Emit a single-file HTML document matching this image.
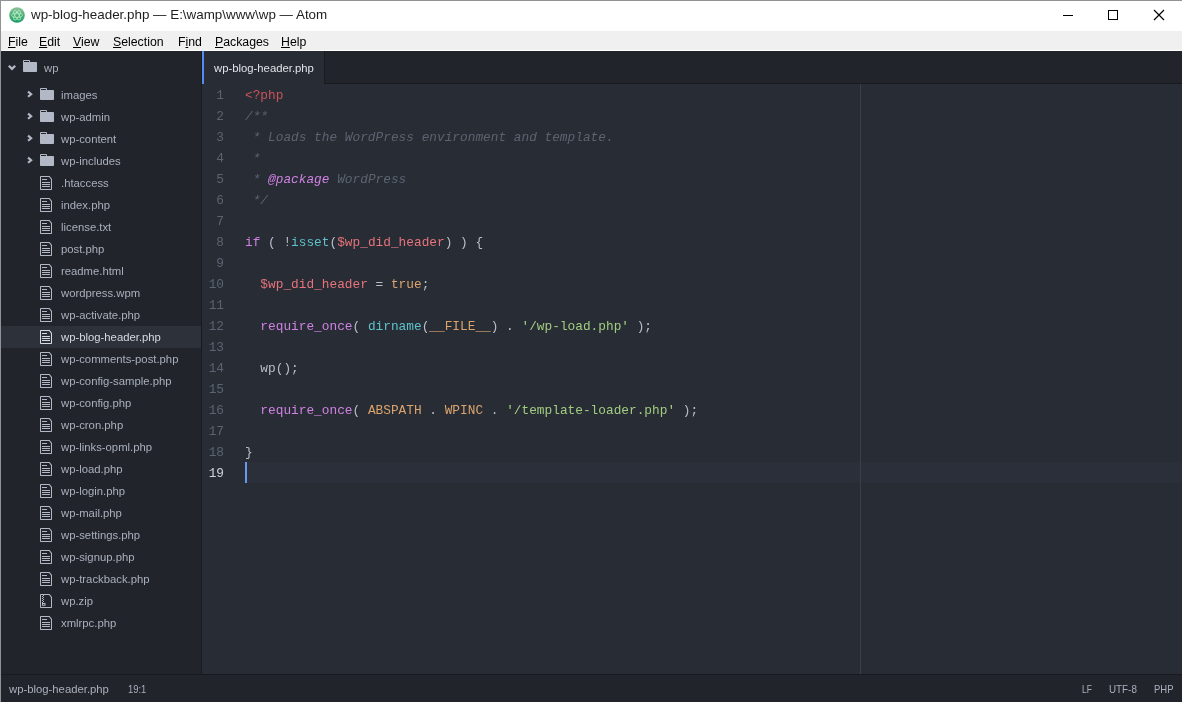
<!DOCTYPE html>
<html><head><meta charset="utf-8">
<style>
*{margin:0;padding:0;box-sizing:border-box}
html,body{width:1182px;height:702px;overflow:hidden;background:#21252b;font-family:"Liberation Sans",sans-serif}
.abs{position:absolute}
#frameT{left:0;top:0;width:1182px;height:1px;background:#909395}
#frameL{left:0;top:0;width:1px;height:702px;background:#909395}
#title{left:1px;top:1px;width:1181px;height:30px;background:#fff}
#title .t{left:30px;top:6px;font-size:13.4px;color:#1e1e1e;white-space:nowrap}
#logo{left:8px;top:6px}
#winctl{left:1040px;top:1px}
#menu{left:1px;top:31px;width:1181px;height:19px;background:#f0f0f0}
#menuline{left:1px;top:50px;width:1181px;height:1px;background:#ffffff}
#menudark{left:1px;top:51px;width:1181px;height:1px;background:#17191d}
#menu span{position:absolute;top:4px;font-size:12.3px;color:#000;white-space:nowrap}
#menu u{text-decoration:underline}
#tree{left:1px;top:51px;width:200px;height:623px;background:#21252b}
#treesep{left:201px;top:51px;width:1px;height:623px;background:#181a1f}
#tabbar{left:202px;top:51px;width:980px;height:33px;background:#21252b;border-bottom:1px solid #181a1f}
#tab{left:202px;top:51px;width:123px;height:33px;background:#282c34;border-left:2px solid #568af2;border-right:1px solid #181a1f}
#tab .t{left:10px;top:11px;font-size:11.3px;color:#e2e4e9;white-space:nowrap}
#editor{left:202px;top:84px;width:980px;height:590px;background:#282c34}
#wrapguide{left:860px;top:84px;width:1px;height:590px;background:#3a3f4b}
#curline{left:245px;top:462px;width:937px;height:21px;background:#2b2f39}
#cursor{left:245px;top:462px;width:2px;height:21px;background:#6797ee}
#status{left:1px;top:674px;width:1181px;height:28px;background:#21252b;border-top:1px solid #181a1f}
#status span{position:absolute;top:8px;font-size:11.3px;color:#a9afbc;white-space:nowrap}
.row{position:absolute;left:1px;width:200px;height:22px}
.row.sel{background:#2c313a}
.row svg{position:absolute}
.row .nm{position:absolute;left:60px;top:4px;font-size:11.3px;line-height:14px;color:#a9afbc;white-space:nowrap}
.row.sel .nm{color:#d7dae0}
.ic{fill:#b3b8c6}
.row.sel .ic{fill:#d7dae0}
.ch{fill:#b3b8c6}
.cl{position:absolute;left:245px;height:21px;line-height:21px;font-family:"Liberation Mono",monospace;font-size:12.8px;white-space:pre;color:#b8beca}
.ln{position:absolute;left:202px;width:22px;height:21px;line-height:21px;text-align:right;font-family:"Liberation Mono",monospace;font-size:12.8px;color:#5c6370}
.ln.cur{color:#d0d4dc}
.cm{color:#5c6370;font-style:italic}
.kw{color:#cf82e4}
.it{font-style:italic}
.red{color:#e7737c}
.emb{color:#c8555b}
.cy{color:#5ec1cc}
.or{color:#dba46e}
.gr{color:#a2cd81}
</style></head><body><div id="root" style="position:absolute;left:0;top:0;width:1182px;height:702px;will-change:transform">
<svg width="0" height="0" style="position:absolute">
<defs>
<symbol id="folder" viewBox="0 0 14 16"><path d="M13 4H7V3c0-.66-.31-1-1-1H1c-.55 0-1 .45-1 1v10c0 .55.45 1 1 1h12c.55 0 1-.45 1-1V5c0-.55-.45-1-1-1zM6 4H1V3h5v1z"/></symbol>
<symbol id="file" viewBox="0 0 12 16"><path d="M2 5h5V4H2zM2 8h8V7H2zm0 2h8V9H2zm0 2h8v-1H2zM12 4v10c0 .55-.45 1-1 1H1c-.55 0-1-.45-1-1V2c0-.55.45-1 1-1h8.6L12 4zM11 4.4L9.1 2H1v12h10z"/></symbol>
<symbol id="zip" viewBox="0 0 12 16"><path d="M12 4v10c0 .55-.45 1-1 1H1c-.55 0-1-.45-1-1V2c0-.55.45-1 1-1h8.6L12 4zM11 4.4L9.1 2H1v12h10z"/><path d="M3 2h1v1H3zM2 3h1v1H2zM3 4h1v1H3zM2 5h1v1H2zM3 6h1v1H3zM2 7h1v1H2zM3 8h1v1H3zM2 9h1v1H2z"/><path d="M2 10h3.5v2.7H2zM3 11v.7h1.5V11z" fill-rule="evenodd"/></symbol>
<symbol id="chev" viewBox="0 0 8 16"><path d="M7.5 8l-5 5L1 11.5 4.75 8 1 4.5 2.5 3l5 5z"/></symbol>
<symbol id="chevd" viewBox="0 0 10 16"><path d="M5 11L0 6l1.5-1.5L5 8.25 8.5 4.5 10 6l-5 5z"/></symbol>
</defs></svg>
<div class="abs" id="title">
<svg class="abs" id="logo" width="16" height="16" viewBox="0 0 16 16">
<defs><linearGradient id="lg" x1="0" y1="0" x2="0" y2="1"><stop offset="0" stop-color="#8fc59a"/><stop offset="0.55" stop-color="#4aad7a"/><stop offset="1" stop-color="#139a63"/></linearGradient></defs>
<circle cx="8" cy="8" r="7.8" fill="url(#lg)"/>
<g fill="none" stroke="#b9f0c4" stroke-width="0.75">
<ellipse cx="8" cy="8.3" rx="5.4" ry="2.1" transform="rotate(60 8 8.3)"/>
<ellipse cx="8" cy="8.3" rx="5.4" ry="2.1" transform="rotate(-60 8 8.3)"/>
<ellipse cx="8" cy="8.3" rx="5.4" ry="2.1"/>
</g>
</svg>
<div class="abs t">wp-blog-header.php — E:\wamp\www\wp — Atom</div>
</div>
<svg class="abs" id="winctl" width="142" height="29">
<line x1="23" y1="14.5" x2="33" y2="14.5" stroke="#000" stroke-width="1"/>
<rect x="68.5" y="9.5" width="9" height="9" fill="none" stroke="#000" stroke-width="1"/>
<path d="M114 9 L124 19 M124 9 L114 19" stroke="#000" stroke-width="1.2"/>
</svg>
<div class="abs" id="frameT"></div>
<div class="abs" id="frameL"></div>
<div class="abs" id="menu">
<span style="left:7px"><u>F</u>ile</span>
<span style="left:38px"><u>E</u>dit</span>
<span style="left:72px"><u>V</u>iew</span>
<span style="left:112px"><u>S</u>election</span>
<span style="left:177px">F<u>i</u>nd</span>
<span style="left:214px"><u>P</u>ackages</span>
<span style="left:280px"><u>H</u>elp</span>
</div>
<div class="abs" id="menuline"></div>
<div class="abs" id="menudark"></div>
<div class="abs" id="tree">
</div>
<div class="abs" style="left:1px;top:56px;width:200px;height:22px">
<svg class="abs" style="left:7px;top:8px;fill:#b3b8c6" width="9" height="7"><path d="M0 1.6 L1.6 0 L4 2.4 L6.4 0 L8 1.6 L4 5.6 Z" transform="translate(0,0.9)"/></svg>
<svg class="abs" style="left:21.8px;top:2.3px;fill:#b3b8c6" width="14" height="16"><use href="#folder"/></svg>
<span class="abs" style="left:43px;top:5px;font-size:11.3px;line-height:14px;color:#a9afbc">wp</span>
</div>
<div class="row" style="top:84px"><svg class="ic" style="left:39px;top:2.1px" width="14" height="16"><use href="#folder"/></svg><svg class="ch" style="left:26px;top:6.3px" width="7" height="8"><path d="M0.3 1.5 L1.8 -0.1 L5.8 3.3 L1.8 6.7 L0.3 5.1 L2.6 3.3 Z" transform="translate(0,0.9)"/></svg><span class="nm">images</span></div>
<div class="row" style="top:106px"><svg class="ic" style="left:39px;top:2.1px" width="14" height="16"><use href="#folder"/></svg><svg class="ch" style="left:26px;top:6.3px" width="7" height="8"><path d="M0.3 1.5 L1.8 -0.1 L5.8 3.3 L1.8 6.7 L0.3 5.1 L2.6 3.3 Z" transform="translate(0,0.9)"/></svg><span class="nm">wp-admin</span></div>
<div class="row" style="top:128px"><svg class="ic" style="left:39px;top:2.1px" width="14" height="16"><use href="#folder"/></svg><svg class="ch" style="left:26px;top:6.3px" width="7" height="8"><path d="M0.3 1.5 L1.8 -0.1 L5.8 3.3 L1.8 6.7 L0.3 5.1 L2.6 3.3 Z" transform="translate(0,0.9)"/></svg><span class="nm">wp-content</span></div>
<div class="row" style="top:150px"><svg class="ic" style="left:39px;top:2.1px" width="14" height="16"><use href="#folder"/></svg><svg class="ch" style="left:26px;top:6.3px" width="7" height="8"><path d="M0.3 1.5 L1.8 -0.1 L5.8 3.3 L1.8 6.7 L0.3 5.1 L2.6 3.3 Z" transform="translate(0,0.9)"/></svg><span class="nm">wp-includes</span></div>
<div class="row" style="top:172px"><svg class="ic" style="left:39px;top:3px" width="12" height="16"><use href="#file"/></svg><span class="nm">.htaccess</span></div>
<div class="row" style="top:194px"><svg class="ic" style="left:39px;top:3px" width="12" height="16"><use href="#file"/></svg><span class="nm">index.php</span></div>
<div class="row" style="top:216px"><svg class="ic" style="left:39px;top:3px" width="12" height="16"><use href="#file"/></svg><span class="nm">license.txt</span></div>
<div class="row" style="top:238px"><svg class="ic" style="left:39px;top:3px" width="12" height="16"><use href="#file"/></svg><span class="nm">post.php</span></div>
<div class="row" style="top:260px"><svg class="ic" style="left:39px;top:3px" width="12" height="16"><use href="#file"/></svg><span class="nm">readme.html</span></div>
<div class="row" style="top:282px"><svg class="ic" style="left:39px;top:3px" width="12" height="16"><use href="#file"/></svg><span class="nm">wordpress.wpm</span></div>
<div class="row" style="top:304px"><svg class="ic" style="left:39px;top:3px" width="12" height="16"><use href="#file"/></svg><span class="nm">wp-activate.php</span></div>
<div class="row sel" style="top:326px"><svg class="ic" style="left:39px;top:3px" width="12" height="16"><use href="#file"/></svg><span class="nm">wp-blog-header.php</span></div>
<div class="row" style="top:348px"><svg class="ic" style="left:39px;top:3px" width="12" height="16"><use href="#file"/></svg><span class="nm">wp-comments-post.php</span></div>
<div class="row" style="top:370px"><svg class="ic" style="left:39px;top:3px" width="12" height="16"><use href="#file"/></svg><span class="nm">wp-config-sample.php</span></div>
<div class="row" style="top:392px"><svg class="ic" style="left:39px;top:3px" width="12" height="16"><use href="#file"/></svg><span class="nm">wp-config.php</span></div>
<div class="row" style="top:414px"><svg class="ic" style="left:39px;top:3px" width="12" height="16"><use href="#file"/></svg><span class="nm">wp-cron.php</span></div>
<div class="row" style="top:436px"><svg class="ic" style="left:39px;top:3px" width="12" height="16"><use href="#file"/></svg><span class="nm">wp-links-opml.php</span></div>
<div class="row" style="top:458px"><svg class="ic" style="left:39px;top:3px" width="12" height="16"><use href="#file"/></svg><span class="nm">wp-load.php</span></div>
<div class="row" style="top:480px"><svg class="ic" style="left:39px;top:3px" width="12" height="16"><use href="#file"/></svg><span class="nm">wp-login.php</span></div>
<div class="row" style="top:502px"><svg class="ic" style="left:39px;top:3px" width="12" height="16"><use href="#file"/></svg><span class="nm">wp-mail.php</span></div>
<div class="row" style="top:524px"><svg class="ic" style="left:39px;top:3px" width="12" height="16"><use href="#file"/></svg><span class="nm">wp-settings.php</span></div>
<div class="row" style="top:546px"><svg class="ic" style="left:39px;top:3px" width="12" height="16"><use href="#file"/></svg><span class="nm">wp-signup.php</span></div>
<div class="row" style="top:568px"><svg class="ic" style="left:39px;top:3px" width="12" height="16"><use href="#file"/></svg><span class="nm">wp-trackback.php</span></div>
<div class="row" style="top:590px"><svg class="ic" style="left:39px;top:3px" width="12" height="16"><use href="#zip"/></svg><span class="nm">wp.zip</span></div>
<div class="row" style="top:612px"><svg class="ic" style="left:39px;top:3px" width="12" height="16"><use href="#file"/></svg><span class="nm">xmlrpc.php</span></div>
<div class="abs" id="treesep"></div>
<div class="abs" id="tabbar"></div>
<div class="abs" id="editor"></div>
<div class="abs" id="curline"></div>
<div class="abs" id="wrapguide"></div>
<div class="abs" id="tab"><div class="abs t">wp-blog-header.php</div></div>
<div class="ln" style="top:85px">1</div>
<div class="ln" style="top:106px">2</div>
<div class="ln" style="top:127px">3</div>
<div class="ln" style="top:148px">4</div>
<div class="ln" style="top:169px">5</div>
<div class="ln" style="top:190px">6</div>
<div class="ln" style="top:211px">7</div>
<div class="ln" style="top:232px">8</div>
<div class="ln" style="top:253px">9</div>
<div class="ln" style="top:274px">10</div>
<div class="ln" style="top:295px">11</div>
<div class="ln" style="top:316px">12</div>
<div class="ln" style="top:337px">13</div>
<div class="ln" style="top:358px">14</div>
<div class="ln" style="top:379px">15</div>
<div class="ln" style="top:400px">16</div>
<div class="ln" style="top:421px">17</div>
<div class="ln" style="top:442px">18</div>
<div class="ln cur" style="top:463px">19</div>
<div class="cl" style="top:85px"><span class="emb">&lt;?php</span></div>
<div class="cl" style="top:106px"><span class="cm">/**</span></div>
<div class="cl" style="top:127px"><span class="cm"> * Loads the WordPress environment and template.</span></div>
<div class="cl" style="top:148px"><span class="cm"> *</span></div>
<div class="cl" style="top:169px"><span class="cm"> * </span><span class="kw it">@package</span><span class="cm"> WordPress</span></div>
<div class="cl" style="top:190px"><span class="cm"> */</span></div>
<div class="cl" style="top:211px"></div>
<div class="cl" style="top:232px"><span class="kw">if</span> ( !<span class="cy">isset</span>(<span class="red">$wp_did_header</span>) ) {</div>
<div class="cl" style="top:253px"></div>
<div class="cl" style="top:274px">  <span class="red">$wp_did_header</span> = <span class="or">true</span>;</div>
<div class="cl" style="top:295px"></div>
<div class="cl" style="top:316px">  <span class="kw">require_once</span>( <span class="cy">dirname</span>(<span class="or">__FILE__</span>) . <span class="gr">'/wp-load.php'</span> );</div>
<div class="cl" style="top:337px"></div>
<div class="cl" style="top:358px">  wp();</div>
<div class="cl" style="top:379px"></div>
<div class="cl" style="top:400px">  <span class="kw">require_once</span>( <span class="or">ABSPATH</span> . <span class="or">WPINC</span> . <span class="gr">'/template-loader.php'</span> );</div>
<div class="cl" style="top:421px"></div>
<div class="cl" style="top:442px">}</div>
<div class="cl" style="top:463px"></div>
<div class="abs" id="cursor"></div>
<div class="abs" id="status">
<span style="left:8px">wp-blog-header.php</span>
<span style="left:127px;transform:scaleX(0.83);transform-origin:0 0">19:1</span>
<span style="left:1081px;transform:scaleX(0.74);transform-origin:0 0">LF</span>
<span style="left:1108px;transform:scaleX(0.87);transform-origin:0 0">UTF-8</span>
<span style="left:1153px;transform:scaleX(0.84);transform-origin:0 0">PHP</span>
</div>
</div></body></html>
